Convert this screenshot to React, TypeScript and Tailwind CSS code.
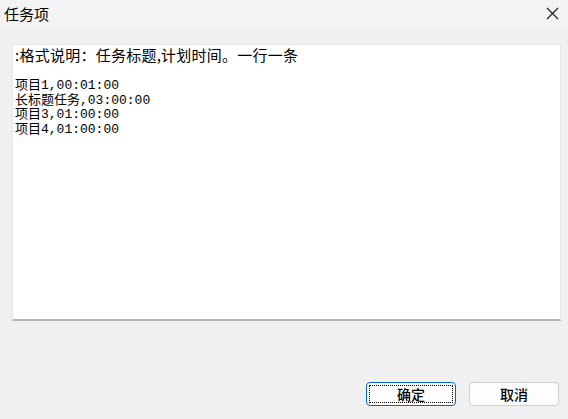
import React from "react";

const cjk = '"Noto Sans CJK SC", "Noto Sans", sans-serif';
const mono = '"Liberation Mono", "Noto Sans CJK SC", monospace';

export default function App() {
  const lines = ["项目1,00:01:00", "长标题任务,03:00:00", "项目3,01:00:00", "项目4,01:00:00"];
  return (
    <div className="w-[568px] h-[419px] bg-[#f0f0f0] flex flex-col overflow-hidden" style={{ fontFamily: cjk }}>
      <div className="h-[30px] bg-[#f3f3f3] flex items-center justify-between pl-[4px] pr-[9px] shrink-0">
        <span className="text-[15px] leading-[20px] text-black -mt-[3px]">任务项</span>
        <svg width="13" height="13" viewBox="0 0 13 13" className="-mt-[3px]">
          <path d="M1 1 L12 12 M12 1 L1 12" stroke="#1a1a1a" strokeWidth="1.1" fill="none" />
        </svg>
      </div>
      <div className="flex flex-col px-[12px] pt-[14px]">
        <div className="h-[277px] bg-white border border-[#e6e6e6] border-b-2 border-b-[#b4b4b4] w-[549px] pt-[1px] pl-[2px] text-black">
          <div className="text-[15px] leading-[17px] tracking-[0.25px]" style={{ fontFamily: cjk }}>:格式说明：任务标题,计划时间。一行一条</div>
          <div className="h-[16px]" />
          {lines.map((l) => (
            <div key={l} className="text-[13px] leading-[14.67px] whitespace-pre" style={{ fontFamily: mono }}>
              {l}
            </div>
          ))}
        </div>
      </div>
      <div className="flex justify-end gap-[13px] pr-[9px] mt-[61px]">
        <button className="w-[90px] h-[24px] rounded-[4px] border border-[#0067c0] bg-[#fdfdfd] p-[2px] flex">
          <div className="flex-1 border border-dotted border-black flex items-center justify-center text-[14px] leading-[16px] text-black font-medium">
            确定
          </div>
        </button>
        <button className="w-[90px] h-[24px] rounded-[4px] border border-[#d0d0d0] bg-[#fdfdfd] flex items-center justify-center text-[14px] leading-[16px] text-black font-medium">
          取消
        </button>
      </div>
    </div>
  );
}
